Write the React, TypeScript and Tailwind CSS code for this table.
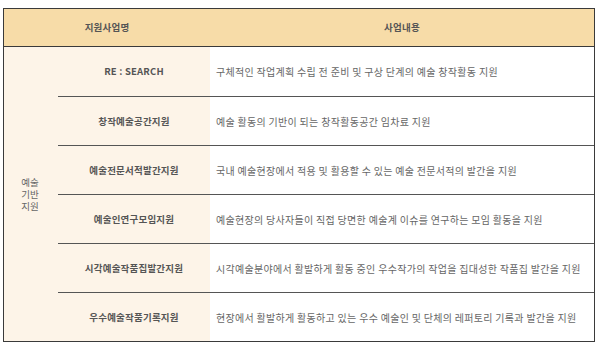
import React from "react";

const rows = [
  { name: "RE : SEARCH", desc: "구체적인 작업계획 수립 전 준비 및 구상 단계의 예술 창작활동 지원" },
  { name: "창작예술공간지원", desc: "예술 활동의 기반이 되는 창작활동공간 임차료 지원" },
  { name: "예술전문서적발간지원", desc: "국내 예술현장에서 적용 및 활용할 수 있는 예술 전문서적의 발간을 지원" },
  { name: "예술인연구모임지원", desc: "예술현장의 당사자들이 직접 당면한 예술계 이슈를 연구하는 모임 활동을 지원" },
  { name: "시각예술작품집발간지원", desc: "시각예술분야에서 활발하게 활동 중인 우수작가의 작업을 집대성한 작품집 발간을 지원" },
  { name: "우수예술작품기록지원", desc: "현장에서 활발하게 활동하고 있는 우수 예술인 및 단체의 레퍼토리 기록과 발간을 지원" },
];

export default function App() {
  return (
    <div
      className="w-[600px] h-[347px] bg-white pt-[8px] pl-[3px]"
      style={{ fontFamily: '"Noto Sans CJK KR", "Noto Sans", sans-serif' }}
    >
      <div className="w-[592px] border border-[#3a3a3a]">
        <div className="flex h-[38px] bg-[#f7dca8] border-b border-[#3a3a3a] text-[9.5px] font-semibold text-[#555] tracking-[0.2px]">
          <div className="w-[206px] flex items-center justify-center">지원사업명</div>
          <div className="flex-1 flex items-center justify-center">사업내용</div>
        </div>
        <div className="flex">
          <div className="w-[54px] bg-[#fdf4e8] flex items-center justify-center text-center text-[9.5px] leading-[12px] text-[#666] pr-[2px]">
            예술
            <br />
            기반
            <br />
            지원
          </div>
          <div className="flex-1 flex flex-col">
            {rows.map((r, i) => (
              <div
                key={r.name}
                className={`flex h-[49px] ${i > 0 ? "border-t border-[#555]" : ""}`}
              >
                <div className="w-[152px] bg-[#fdf4e8] flex items-center justify-center text-[9.5px] font-semibold text-[#555] tracking-[0.2px]">
                  {r.name}
                </div>
                <div className="flex-1 bg-white flex items-center pl-[6px] text-[10px] tracking-[0.3px] text-[#666] whitespace-nowrap">
                  {r.desc}
                </div>
              </div>
            ))}
          </div>
        </div>
      </div>
    </div>
  );
}
